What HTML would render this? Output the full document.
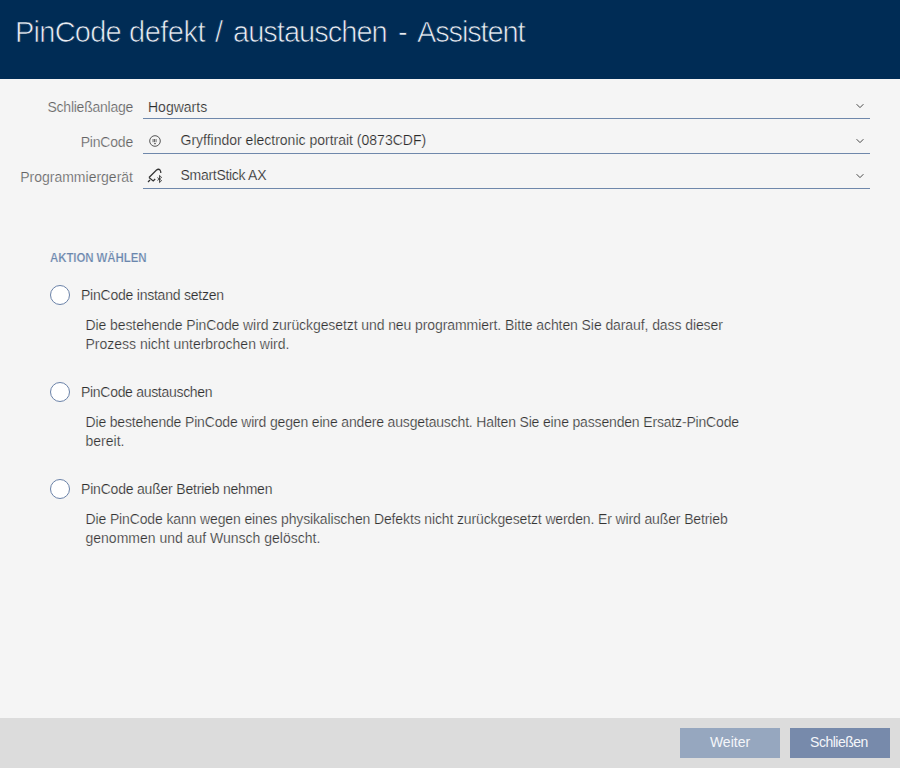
<!DOCTYPE html>
<html><head><meta charset="utf-8">
<style>
*{margin:0;padding:0;box-sizing:border-box}
html,body{width:900px;height:768px;overflow:hidden;background:#f5f5f5;font-family:"Liberation Sans",sans-serif}
.abs{position:absolute;white-space:nowrap}
#hdr{position:absolute;left:0;top:0;width:900px;height:79px;background:#002c55}
.tw{top:16px;font-size:29px;line-height:32px;letter-spacing:-0.5px;color:#e8edf3;-webkit-text-stroke:0.7px #002c55}
.lbl{font-size:14px;line-height:16px;color:#636363;text-align:right;right:767px;-webkit-text-stroke:0.2px #f5f5f5}
.val{font-size:14px;line-height:16px;color:#2a2a2a;-webkit-text-stroke:0.2px #f5f5f5}
.line{position:absolute;left:143px;width:727px;height:1px;background:#6f88ab}
.chev{position:absolute;left:856px;width:8px;height:6px}
#sect{left:50px;top:250.5px;font-size:11.5px;line-height:14px;font-weight:bold;letter-spacing:-0.1px;color:#6a86ad;-webkit-text-stroke:0.2px #f5f5f5;transform:scaleY(1.16);transform-origin:0 11px}
.radio{position:absolute;left:50px;width:20px;height:20px;border:1px solid #6a82a8;border-radius:50%;background:#fff}
.opt{font-size:14px;line-height:16px;color:#2e2e2e;left:81px;-webkit-text-stroke:0.2px #f5f5f5}
.desc{font-size:14px;line-height:19px;color:#333;left:85.5px;-webkit-text-stroke:0.22px #f5f5f5}
#ftr{position:absolute;left:0;top:718px;width:900px;height:50px;background:#dcdcdc}
.btn{position:absolute;top:728px;width:100px;height:30px;color:#f4f6fa;font-size:14px;line-height:28px;text-align:center}
</style></head><body>
<div id="hdr"></div>
<div class="abs tw" style="left:15px;letter-spacing:-0.75px">PinCode</div>
<div class="abs tw" style="left:129px">defekt</div>
<div class="abs tw" style="left:215px">/</div>
<div class="abs tw" style="left:233px;letter-spacing:-0.98px">austauschen</div>
<div class="abs tw" style="left:398px">-</div>
<div class="abs tw" style="left:417px;letter-spacing:-1.15px">Assistent</div>

<div class="abs lbl" style="top:99px;letter-spacing:-0.25px">Schließanlage</div>
<div class="abs val" style="left:148px;top:99px">Hogwarts</div>
<div class="line" style="top:118px"></div>
<svg class="chev" style="top:103px" viewBox="0 0 8 6"><path d="M0.6 1.2 L4 4.6 L7.4 1.2" fill="none" stroke="#484848" stroke-width="1"/></svg>

<div class="abs lbl" style="top:134px;letter-spacing:-0.2px">PinCode</div>
<svg style="position:absolute;left:148px;top:134px" width="14" height="14" viewBox="0 0 14 14">
<circle cx="7" cy="7" r="5.3" fill="none" stroke="#555" stroke-width="1"/>
<g fill="#5a5a5a"><rect x="4.6" y="5" width="0.9" height="3.2"/><rect x="6.1" y="5" width="0.9" height="3.2"/><rect x="7.6" y="5" width="0.9" height="3.2"/><rect x="6.2" y="9" width="1.6" height="1.2"/></g>
</svg>
<div class="abs val" style="left:180.5px;top:132px">Gryffindor electronic portrait (0873CDF)</div>
<div class="line" style="top:153px"></div>
<svg class="chev" style="top:138px" viewBox="0 0 8 6"><path d="M0.6 1.2 L4 4.6 L7.4 1.2" fill="none" stroke="#484848" stroke-width="1"/></svg>

<div class="abs lbl" style="top:169px">Programmiergerät</div>
<svg style="position:absolute;left:146px;top:167px" width="18" height="17" viewBox="0 0 18 17">
<path d="M3 10.5 L10.5 3 Q12.5 1.5 14 3 Q15 4.5 14.8 6" fill="none" stroke="#333" stroke-width="1.25"/>
<path d="M3 10.5 L7.2 14 L9.2 12" fill="none" stroke="#333" stroke-width="1.25"/>
<path d="M2 15 L4 13" fill="none" stroke="#333" stroke-width="1.3"/>
<path d="M11.4 10.6 L15.6 13.6 L13.5 15.6 L13.5 8.4 L15.6 10.4 L11.4 13.4" fill="none" stroke="#333" stroke-width="0.85"/>
</svg>
<div class="abs val" style="left:180.5px;top:167px;letter-spacing:-0.29px">SmartStick AX</div>
<div class="line" style="top:188px"></div>
<svg class="chev" style="top:173px" viewBox="0 0 8 6"><path d="M0.6 1.2 L4 4.6 L7.4 1.2" fill="none" stroke="#484848" stroke-width="1"/></svg>

<div id="sect" class="abs">AKTION WÄHLEN</div>

<div class="radio" style="top:285px"></div>
<div class="abs opt" style="top:287px;letter-spacing:-0.23px">PinCode instand setzen</div>
<div class="abs desc" style="top:316px"><span style="letter-spacing:-0.086px">Die bestehende PinCode wird zurückgesetzt und neu programmiert. Bitte achten Sie darauf, dass dieser</span><br>Prozess nicht unterbrochen wird.</div>

<div class="radio" style="top:382px"></div>
<div class="abs opt" style="top:384px;letter-spacing:-0.3px">PinCode austauschen</div>
<div class="abs desc" style="top:413px"><span style="letter-spacing:-0.167px">Die bestehende PinCode wird gegen eine andere ausgetauscht. Halten Sie eine passenden Ersatz-PinCode</span><br>bereit.</div>

<div class="radio" style="top:479px"></div>
<div class="abs opt" style="top:481px;letter-spacing:-0.2px">PinCode außer Betrieb nehmen</div>
<div class="abs desc" style="top:510px"><span style="letter-spacing:-0.13px">Die PinCode kann wegen eines physikalischen Defekts nicht zurückgesetzt werden. Er wird außer Betrieb</span><br>genommen und auf Wunsch gelöscht.</div>

<div id="ftr"></div>
<div class="btn" style="left:680px;background:#96a7bf">Weiter</div>
<div class="btn" style="left:790px;background:#778aab;letter-spacing:-0.5px;padding-right:2px">Schließen</div>
</body></html>
